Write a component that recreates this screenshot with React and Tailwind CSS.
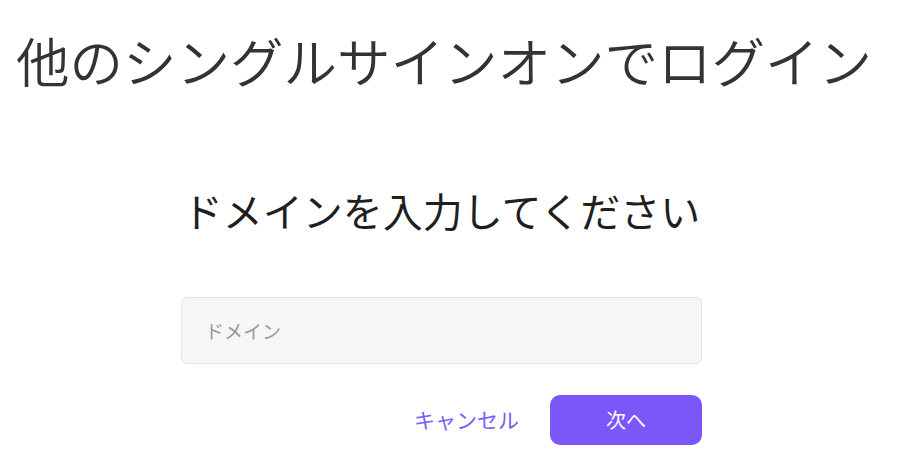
import React from "react";

export default function App() {
  const jp = { fontFamily: '"Noto Sans CJK JP", "Noto Sans", sans-serif' };
  return (
    <div className="w-[900px] h-[474px] bg-white overflow-hidden" style={jp}>
      <h1 className="pl-[16px] pt-[24px] text-[53.5px] leading-[72px] font-[350] text-[#333333] whitespace-nowrap">
        他のシングルサインオンでログイン
      </h1>
      <div className="ml-[181px] w-[521px] flex flex-col">
        <h2 className="mt-[89px] text-center text-[40px] leading-[50px] font-normal text-[#1f1f1f] whitespace-nowrap">
          ドメインを入力してください
        </h2>
        <input
          type="text"
          placeholder="ドメイン"
          className="mt-[62px] h-[67px] w-full rounded-md border border-[#e3e3e3] bg-[#f6f6f6] px-[23px] text-[19px] text-[#333] placeholder:text-[#9a9a9a] outline-none"
          style={jp}
        />
        <div className="mt-[31px] flex items-center justify-end gap-[31px]">
          <button className="text-[21px] text-[#7b5cf5] bg-transparent" style={jp}>
            キャンセル
          </button>
          <button
            className="h-[50px] w-[152px] rounded-[10px] bg-[#7b57fa] text-[20px] text-white"
            style={jp}
          >
            次へ
          </button>
        </div>
      </div>
    </div>
  );
}
